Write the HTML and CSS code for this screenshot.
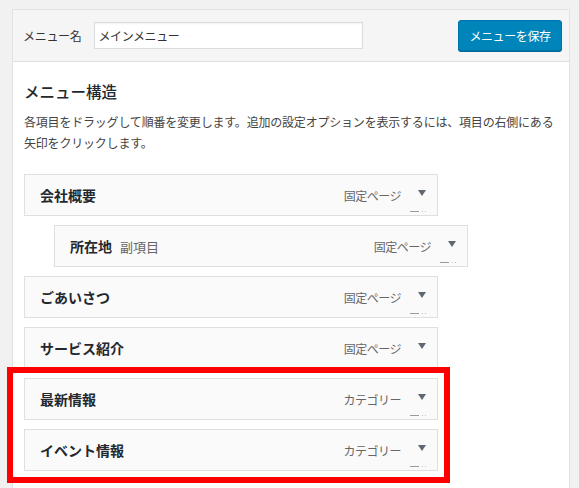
FILE: index.html
```html
<!DOCTYPE html>
<html lang="ja">
<head>
<meta charset="utf-8">
<title>メニュー</title>
<link rel="stylesheet" href="styles.css">
</head>
<body>
<div class="panel">
  <div class="header">
    <label class="name-label" for="menu-name">メニュー名</label>
    <input id="menu-name" class="name-input" type="text" value="メインメニュー">
    <button class="save-btn" type="button">メニューを保存</button>
  </div>
  <div class="body">
    <h3 class="title">メニュー構造</h3>
    <p class="desc">各項目をドラッグして順番を変更します。追加の設定オプションを表示するには、項目の右側にある<br>矢印をクリックします。</p>
    <ul class="menu-list">
      <li class="item"><span class="item-title">会社概要</span><span class="item-type">固定ページ</span><span class="arrow"></span><span class="cut"></span></li>
      <li class="item sub"><span class="item-title">所在地</span><span class="sub-note">副項目</span><span class="item-type">固定ページ</span><span class="arrow"></span><span class="cut"></span></li>
      <li class="item"><span class="item-title">ごあいさつ</span><span class="item-type">固定ページ</span><span class="arrow"></span><span class="cut"></span></li>
      <li class="item"><span class="item-title">サービス紹介</span><span class="item-type">固定ページ</span><span class="arrow"></span></li>
      <li class="item"><span class="item-title">最新情報</span><span class="item-type">カテゴリー</span><span class="arrow"></span><span class="cut"></span></li>
      <li class="item"><span class="item-title">イベント情報</span><span class="item-type">カテゴリー</span><span class="arrow"></span><span class="cut"></span></li>
    </ul>
  </div>
</div>
<div class="highlight"></div>
</body>
</html>
```

FILE: styles.css
```css
html {
  overflow: hidden;
}
body {
  margin: 0;
  position: relative;
  background: #f1f1f1;
  font-family: "Noto Sans CJK JP", "Noto Sans", sans-serif;
  color: #444;
  font-size: 12px;
}
.panel {
  margin: 9px 0 0 12px;
  width: 558px;
  box-sizing: border-box;
  border: 1px solid #e2e2e2;
  background: #fff;
  padding-bottom: 40px;
}
.header {
  display: flex;
  align-items: center;
  height: 51px;
  padding: 0 7px 0 10px;
  background: #f5f5f5;
  border-bottom: 1px solid #dfdfdf;
}
.name-label {
  font-size: 12px;
  color: #333;
  letter-spacing: -0.3px;
  margin-right: 12px;
}
.name-input {
  width: 269px;
  height: 27px;
  box-sizing: border-box;
  border: 1px solid #dcdcdc;
  box-shadow: inset 0 1px 2px rgba(0,0,0,0.06);
  background: #fff;
  padding: 0 4px;
  font-family: inherit;
  font-size: 12px;
  color: #333;
  letter-spacing: -0.4px;
  outline: none;
}
.save-btn {
  margin-left: auto;
  width: 104px;
  height: 31px;
  box-sizing: border-box;
  border: 1px solid #0073aa;
  border-radius: 3px;
  background: #0085ba;
  box-shadow: 0 1px 0 #006799;
  color: #fff;
  font-family: inherit;
  font-size: 12px;
  letter-spacing: -0.4px;
  padding: 0;
}
.body {
  padding: 19px 0 0 11px;
}
.title {
  margin: 0;
  font-size: 15.5px;
  line-height: 20px;
  font-weight: 500;
  color: #23282d;
}
.desc {
  margin: 10px 0 0;
  font-size: 12px;
  line-height: 21px;
  letter-spacing: -0.2px;
  color: #444;
}
.menu-list {
  list-style: none;
  margin: 21px 0 0;
  padding: 0;
}
.item {
  position: relative;
  display: flex;
  align-items: center;
  width: 414px;
  height: 42px;
  box-sizing: border-box;
  margin-bottom: 9px;
  padding: 0 11px 0 15px;
  border: 1px solid #dfdfdf;
  background: #fafafa;
}
.item.sub {
  margin-left: 30px;
}
.item-title {
  font-size: 14px;
  font-weight: 700;
  color: #23282d;
}
.sub-note {
  margin-left: 8px;
  font-size: 13px;
  color: #666;
}
.item-type {
  margin-left: auto;
  font-size: 12px;
  color: #666;
  letter-spacing: -0.5px;
}
.arrow {
  margin: -4px 0 0 17px;
  width: 0;
  height: 0;
  border-left: 4px solid transparent;
  border-right: 4px solid transparent;
  border-top: 6px solid #5f6770;
}
.cut {
  position: absolute;
  right: 9px;
  bottom: 3px;
  width: 18px;
  height: 1px;
  background: linear-gradient(to right, #9a9a9a 0 9px, transparent 9px 12px, #c4c4c4 12px 13px, transparent 13px 15px, #c4c4c4 15px 16px, transparent 16px);
}
.highlight {
  position: absolute;
  left: 7px;
  top: 367px;
  width: 443px;
  height: 116px;
  box-sizing: border-box;
  border: 6px solid #ff0000;
}
```
